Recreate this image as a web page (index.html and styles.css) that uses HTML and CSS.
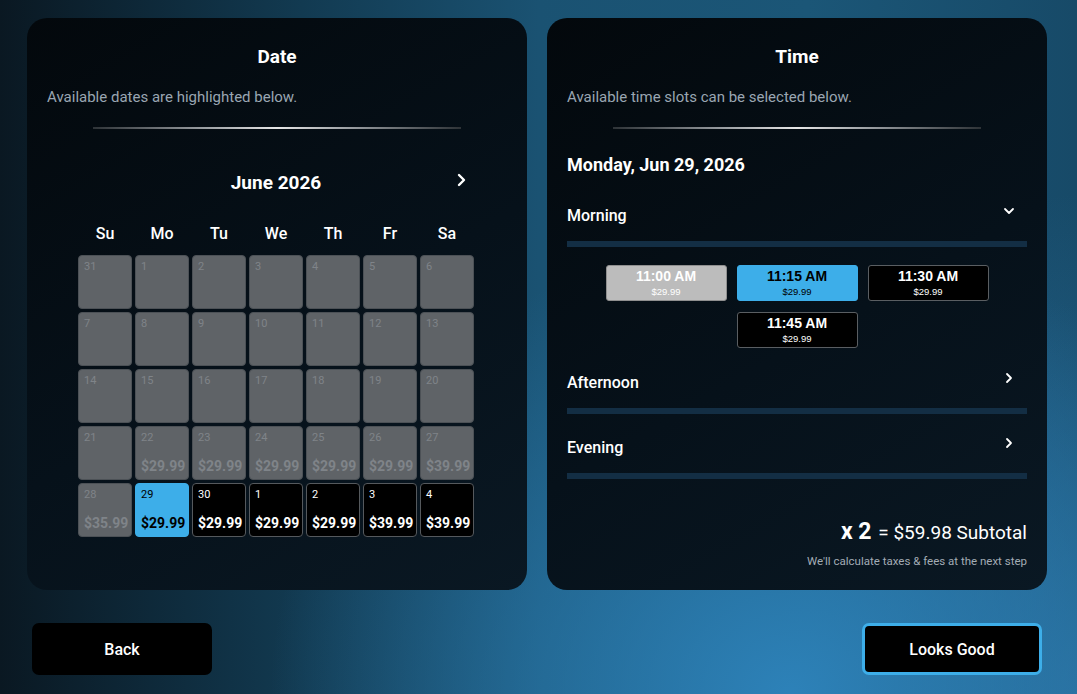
FILE: index.html
```html
<!DOCTYPE html>
<html>
  <head>
    <link rel="stylesheet" href="styles.css">
  </head>
  <body>
    <div class="panels">
      <section class="panel">
        <h2 class="panel-title">Date</h2>
        <p class="panel-sub">Available dates are highlighted below.</p>
        <div class="divider"></div>

        <div class="calendar">
          <div class="cal-head">
            <span class="cal-nav"></span>
            <span class="cal-month">June 2026</span>
            <span class="cal-nav">
              <svg width="12" height="14" viewBox="0 0 12 14"><path d="M3 2l5 5-5 5" fill="none" stroke="#fff" stroke-width="2.4" stroke-linecap="round" stroke-linejoin="round"/></svg>
            </span>
          </div>
          <div class="weekdays">
            <div>Su</div><div>Mo</div><div>Tu</div><div>We</div><div>Th</div><div>Fr</div><div>Sa</div>
          </div>
          <div class="cal-grid">
            <div class="day off"><span class="num">31</span></div>
            <div class="day off"><span class="num">1</span></div>
            <div class="day off"><span class="num">2</span></div>
            <div class="day off"><span class="num">3</span></div>
            <div class="day off"><span class="num">4</span></div>
            <div class="day off"><span class="num">5</span></div>
            <div class="day off"><span class="num">6</span></div>

            <div class="day off"><span class="num">7</span></div>
            <div class="day off"><span class="num">8</span></div>
            <div class="day off"><span class="num">9</span></div>
            <div class="day off"><span class="num">10</span></div>
            <div class="day off"><span class="num">11</span></div>
            <div class="day off"><span class="num">12</span></div>
            <div class="day off"><span class="num">13</span></div>

            <div class="day off"><span class="num">14</span></div>
            <div class="day off"><span class="num">15</span></div>
            <div class="day off"><span class="num">16</span></div>
            <div class="day off"><span class="num">17</span></div>
            <div class="day off"><span class="num">18</span></div>
            <div class="day off"><span class="num">19</span></div>
            <div class="day off"><span class="num">20</span></div>

            <div class="day off"><span class="num">21</span></div>
            <div class="day off"><span class="num">22</span><span class="price">$29.99</span></div>
            <div class="day off"><span class="num">23</span><span class="price">$29.99</span></div>
            <div class="day off"><span class="num">24</span><span class="price">$29.99</span></div>
            <div class="day off"><span class="num">25</span><span class="price">$29.99</span></div>
            <div class="day off"><span class="num">26</span><span class="price">$29.99</span></div>
            <div class="day off"><span class="num">27</span><span class="price">$39.99</span></div>

            <div class="day off"><span class="num">28</span><span class="price">$35.99</span></div>
            <div class="day selected"><span class="num">29</span><span class="price">$29.99</span></div>
            <div class="day open"><span class="num">30</span><span class="price">$29.99</span></div>
            <div class="day open"><span class="num">1</span><span class="price">$29.99</span></div>
            <div class="day open"><span class="num">2</span><span class="price">$29.99</span></div>
            <div class="day open"><span class="num">3</span><span class="price">$39.99</span></div>
            <div class="day open"><span class="num">4</span><span class="price">$39.99</span></div>
          </div>
        </div>
      </section>

      <section class="panel">
        <h2 class="panel-title">Time</h2>
        <p class="panel-sub">Available time slots can be selected below.</p>
        <div class="divider"></div>

        <h3 class="chosen-date">Monday, Jun 29, 2026</h3>

        <div class="period">
          <div class="period-head">
            <span>Morning</span>
            <svg width="12" height="8" viewBox="0 0 12 8"><path d="M2 2l4 4 4-4" fill="none" stroke="#fff" stroke-width="1.8" stroke-linecap="round" stroke-linejoin="round"/></svg>
          </div>
          <div class="period-bar"></div>
          <div class="slots">
            <div class="slot off"><b>11:00 AM</b><small>$29.99</small></div>
            <div class="slot selected"><b>11:15 AM</b><small>$29.99</small></div>
            <div class="slot"><b>11:30 AM</b><small>$29.99</small></div>
            <div class="slot"><b>11:45 AM</b><small>$29.99</small></div>
          </div>
        </div>

        <div class="period">
          <div class="period-head">
            <span>Afternoon</span>
            <svg width="12" height="12" viewBox="0 0 12 12"><path d="M4 2l4 4-4 4" fill="none" stroke="#fff" stroke-width="1.8" stroke-linecap="round" stroke-linejoin="round"/></svg>
          </div>
          <div class="period-bar"></div>
        </div>

        <div class="period">
          <div class="period-head">
            <span>Evening</span>
            <svg width="12" height="12" viewBox="0 0 12 12"><path d="M4 2l4 4-4 4" fill="none" stroke="#fff" stroke-width="1.8" stroke-linecap="round" stroke-linejoin="round"/></svg>
          </div>
          <div class="period-bar"></div>
        </div>

        <div class="summary">
          <div class="subtotal"><span class="qty">x 2</span> = $59.98 Subtotal</div>
          <div class="note">We'll calculate taxes &amp; fees at the next step</div>
        </div>
      </section>
    </div>

    <div class="actions">
      <button class="btn">Back</button>
      <button class="btn primary">Looks Good</button>
    </div>
  </body>
</html>
```

FILE: styles.css
```css
/* page */
html, body {
  margin: 0;
  height: 694px;
  overflow: hidden;
}

body {
  font-family: Roboto, "Liberation Sans", sans-serif;
  color: #fff;
  background:
    radial-gradient(ellipse 520px 460px at 790px 694px, rgba(46, 132, 188, 0.95), rgba(46, 132, 188, 0) 100%),
    radial-gradient(ellipse 300px 500px at 1077px 694px, rgba(42, 110, 156, 0.8), rgba(42, 110, 156, 0) 100%),
    linear-gradient(to right, #0a1822 0%, #123a51 28%, #1a5272 50%, #1b5677 75%, #174a68 100%);
}

.panels {
  display: flex;
  gap: 20px;
  padding: 18px 30px 0 27px;
}

.panel {
  width: 500px;
  height: 572px;
  box-sizing: border-box;
  padding: 28px 20px 22px;
  border-radius: 20px;
  background: linear-gradient(150deg, #03080c 0%, #06111a 55%, #0a1823 100%);
  display: flex;
  flex-direction: column;
}

.panel-title {
  margin: 0;
  text-align: center;
  font-size: 19px;
  font-weight: 700;
  line-height: 22px;
}

.panel-sub {
  margin: 20px 0 0;
  font-size: 15px;
  line-height: 18px;
  color: #9aa6b2;
}

.divider {
  width: 368px;
  height: 2px;
  margin: 21px auto 0;
  background: linear-gradient(90deg, #2e3337, #9a9ea2 30%, #e6e6e6 50%, #9a9ea2 70%, #2e3337);
}

/* calendar */
.calendar {
  width: 396px;
  margin: 0 0 0 31px;
}

.cal-head {
  display: flex;
  justify-content: space-between;
  align-items: center;
  margin-top: 41px;
  height: 24px;
}

.cal-nav {
  width: 24px;
  display: flex;
  justify-content: center;
  margin-top: -4px;
}

.cal-month {
  font-size: 19px;
  font-weight: 700;
}

.weekdays {
  display: grid;
  grid-template-columns: repeat(7, 54px);
  gap: 3px;
  margin-top: 30px;
}

.weekdays div {
  text-align: center;
  font-size: 16px;
  font-weight: 500;
  line-height: 20px;
}

.cal-grid {
  display: grid;
  grid-template-columns: repeat(7, 54px);
  grid-auto-rows: 54px;
  gap: 3px;
  margin-top: 11px;
}

.day {
  box-sizing: border-box;
  border-radius: 4px;
  border: 1px solid #4c5156;
  display: flex;
  flex-direction: column;
  justify-content: space-between;
  padding: 4px 5px 5px;
}

.num {
  font-size: 11px;
  line-height: 14px;
}

.price {
  text-align: center;
  font-size: 14px;
  font-weight: 700;
  line-height: 16px;
}

.day.off {
  background: #5f6367;
  color: #7f8489;
}

.day.selected {
  background: #3daee9;
  border-color: #3daee9;
  color: #000;
}

.day.open {
  background: #000;
  border-color: #55595d;
  color: #fff;
}

/* time */
.chosen-date {
  margin: 25px 0 0;
  font-size: 18px;
  font-weight: 700;
  line-height: 22px;
}

.period-head {
  display: flex;
  justify-content: space-between;
  align-items: center;
  padding-right: 12px;
  margin-top: 29px;
  height: 20px;
  font-size: 16px;
  font-weight: 500;
}

.period-head svg {
  margin-top: -8px;
}

.period + .period .period-head {
  margin-top: 23px;
}

.period-bar {
  height: 6px;
  margin-top: 16px;
  background: #132e44;
}

.slots {
  display: flex;
  flex-wrap: wrap;
  justify-content: center;
  gap: 11px 10px;
  padding: 0 37px;
  margin: 18px 0 1px;
}

.slot {
  box-sizing: border-box;
  width: 121px;
  height: 36px;
  border: 1px solid #5a5e62;
  border-radius: 3px;
  background: #000;
  font-family: "Liberation Sans", Arial, sans-serif;
  display: flex;
  flex-direction: column;
  align-items: center;
  padding-top: 2px;
}

.slot b {
  font-size: 14px;
  line-height: 17px;
}

.slot small {
  font-size: 9.5px;
  line-height: 12px;
  margin-top: 1px;
}

.slot.off {
  background: #bcbcbc;
  border-color: #8f8f8f;
}

.slot.selected {
  background: #3daee9;
  border-color: #3daee9;
  color: #000;
}

.summary {
  margin-top: auto;
  text-align: right;
}

.subtotal {
  font-size: 19px;
}

.qty {
  font-size: 23px;
  font-weight: 700;
  margin-right: 2px;
}

.note {
  margin-top: 9px;
  font-size: 11.5px;
  color: #a3acb5;
}

/* footer buttons */
.actions {
  display: flex;
  justify-content: space-between;
  padding: 33px 35px 0 32px;
}

.btn {
  width: 180px;
  height: 52px;
  border: none;
  border-radius: 7px;
  background: #000;
  color: #fff;
  font-family: Roboto, "Liberation Sans", sans-serif;
  font-size: 16px;
  font-weight: 500;
}

.btn.primary {
  border: 3px solid #3daee9;
}
```
